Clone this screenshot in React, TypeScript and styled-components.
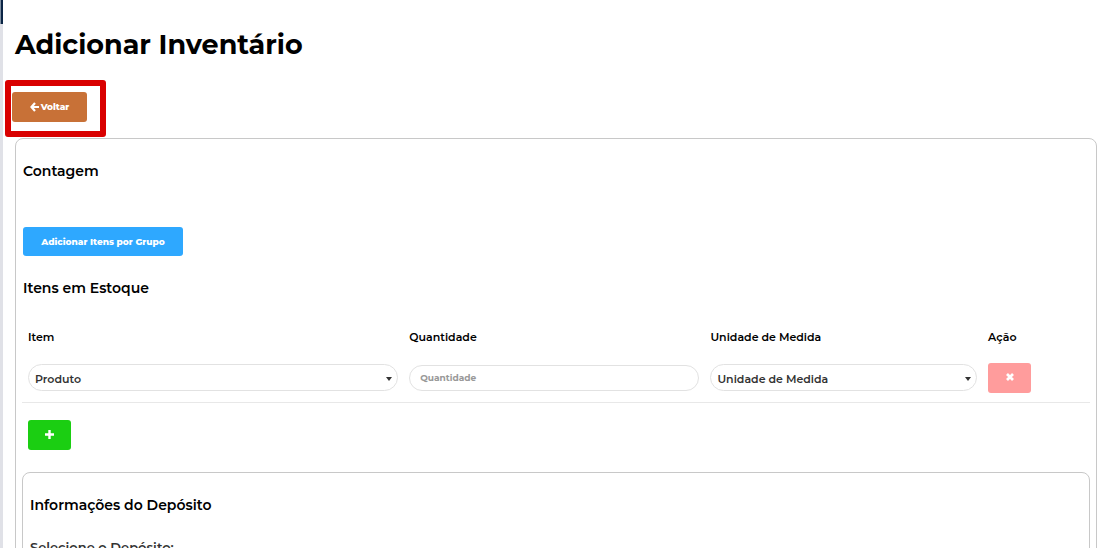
import React from "react";
import styled, { createGlobalStyle } from "styled-components";

const GlobalStyle = createGlobalStyle`
  * { box-sizing: border-box; }
  body { margin: 0; background: #fff; color: #000; font-family: Montserrat, Inter, sans-serif; }
  button, input, select { font-family: inherit; }
`;

const Shell = styled.div`
  display: flex;
  height: 100vh;
  overflow: hidden;
`;

const SideEdge = styled.aside`
  flex: 0 0 3px;
  background: #e0e1e7;
`;

const SideHeader = styled.div`
  height: 24px;
  background: #0b2545;
  border-left: 1px solid #8090a2;
`;

const Content = styled.main`
  flex: 1;
  min-width: 0;
  padding: 25px 7px 0 12px;
`;

const Title = styled.h1`
  margin: 0;
  font-size: 27px;
  line-height: 40px;
  font-weight: 700;
`;

const Toolbar = styled.div`
  position: relative;
  display: flex;
  margin: 27px 0 16px -3px;
`;

const Highlight = styled.div`
  position: absolute;
  top: -12px;
  left: -7px;
  width: 101px;
  height: 57px;
  border: 6px solid #d90000;
  border-radius: 3px;
  pointer-events: none;
`;

const Button = styled.button<{ $color: string; $width: number; $height?: number }>`
  display: inline-flex;
  align-items: center;
  justify-content: center;
  gap: 2px;
  width: ${(p) => p.$width}px;
  height: ${(p) => p.$height ?? 30}px;
  padding: 0 0 1px;
  border: 0;
  border-radius: 3px;
  background: ${(p) => p.$color};
  color: #fff;
  font-size: 9px;
  font-weight: 800;
  white-space: nowrap;
`;

const Panel = styled.section`
  padding: 20px 6px;
  border: 1px solid #c8c8c8;
  border-radius: 8px;
`;

const InnerPanel = styled(Panel)`
  margin-top: 22px;
  padding: 20px 7px;
`;

const Heading = styled.h2`
  margin: 0;
  font-size: 14px;
  line-height: 24px;
  font-weight: 600;
`;

const Intro = styled.div`
  padding-left: 1px;
`;

const GroupAction = styled.div`
  display: flex;
  margin: 44px 0 20px;
`;

const Items = styled.table`
  width: 100%;
  table-layout: fixed;
  border-collapse: collapse;
  margin-top: 25px;
`;

const HeadCell = styled.th<{ $width?: string }>`
  width: ${(p) => p.$width ?? "auto"};
  height: 24px;
  padding: 0 5px 0 6px;
  font-size: 11px;
  font-weight: 600;
  text-align: left;
`;

const Cell = styled.td`
  height: 53px;
  padding: 5px 5px 0 6px;
  border-bottom: 1px solid #e8e8e8;
  vertical-align: middle;
`;

const SelectBox = styled.div`
  position: relative;
  display: flex;
  &::after {
    content: "";
    position: absolute;
    right: 6px;
    top: 13px;
    border: 3px solid transparent;
    border-top: 4px solid #333;
    border-bottom: 0;
    pointer-events: none;
  }
`;

const Select = styled.select`
  appearance: none;
  width: 100%;
  height: 27px;
  padding: 2px 20px 0 6px;
  border: 1px solid #e2e2e2;
  border-radius: 14px;
  background: #fff;
  color: #333;
  font-size: 11px;
  font-weight: 600;
`;

const Input = styled.input`
  display: block;
  width: 100%;
  height: 26px;
  padding: 0 10px;
  border: 1px solid #e2e2e2;
  border-radius: 13px;
  background: #fff;
  font-size: 9px;
  font-weight: 700;
  &::placeholder { color: #999; opacity: 1; }
`;

const AddRow = styled.div`
  display: flex;
  padding: 17px 6px 0;
`;

const Label = styled.label`
  display: block;
  margin-top: 18px;
  color: #333;
  font-size: 13px;
  line-height: 24px;
  font-weight: 600;
`;

const ArrowIcon = () => (
  <svg width="9" height="10" viewBox="0 0 9 10" fill="none" stroke="#fff" strokeWidth="2.2" aria-hidden="true">
    <path d="M5 1 1.5 5 5 9M1.5 5H9" />
  </svg>
);

const TimesIcon = () => (
  <svg width="8" height="8" viewBox="0 0 8 8" stroke="#fff" strokeWidth="2.7" aria-hidden="true">
    <path d="m1 1 6 6M7 1 1 7" />
  </svg>
);

const PlusIcon = () => (
  <svg width="9" height="9" viewBox="0 0 9 9" stroke="#fff" strokeWidth="2.4" aria-hidden="true">
    <path d="M4.5 0v9M0 4.5h9" />
  </svg>
);

export default function App() {
  return (
    <Shell>
      <GlobalStyle />
      <SideEdge><SideHeader /></SideEdge>
      <Content>
        <Title>Adicionar Inventário</Title>
        <Toolbar>
          <Button type="button" $color="#c87137" $width={75}><ArrowIcon />Voltar</Button>
          <Highlight />
        </Toolbar>
        <Panel>
          <Intro>
            <Heading>Contagem</Heading>
            <GroupAction>
              <Button type="button" $color="#2ea8ff" $width={160} $height={29}>Adicionar Itens por Grupo</Button>
            </GroupAction>
            <Heading>Itens em Estoque</Heading>
          </Intro>
          <Items>
            <thead>
              <tr>
                <HeadCell $width="35.7%">Item</HeadCell>
                <HeadCell $width="28.2%">Quantidade</HeadCell>
                <HeadCell $width="26%">Unidade de Medida</HeadCell>
                <HeadCell>Ação</HeadCell>
              </tr>
            </thead>
            <tbody>
              <tr>
                <Cell>
                  <SelectBox>
                    <Select aria-label="Item"><option>Produto</option></Select>
                  </SelectBox>
                </Cell>
                <Cell><Input aria-label="Quantidade" placeholder="Quantidade" /></Cell>
                <Cell>
                  <SelectBox>
                    <Select aria-label="Unidade de Medida"><option>Unidade de Medida</option></Select>
                  </SelectBox>
                </Cell>
                <Cell>
                  <Button type="button" aria-label="Remover item" $color="#ff9c9c" $width={43}><TimesIcon /></Button>
                </Cell>
              </tr>
            </tbody>
          </Items>
          <AddRow>
            <Button type="button" aria-label="Adicionar item" $color="#1bce12" $width={43}><PlusIcon /></Button>
          </AddRow>
          <InnerPanel>
            <Heading>Informações do Depósito</Heading>
            <Label htmlFor="deposito">Selecione o Depósito:</Label>
            <SelectBox>
              <Select id="deposito" />
            </SelectBox>
          </InnerPanel>
        </Panel>
      </Content>
    </Shell>
  );
}
